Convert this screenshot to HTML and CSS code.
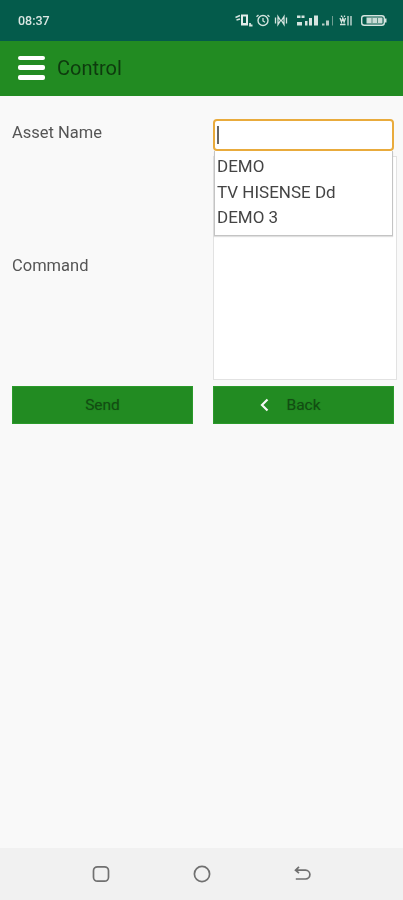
FILE: index.html
```html
<!DOCTYPE html>
<html lang="en">
<head>
<meta charset="utf-8">
<title>Control</title>
<link rel="stylesheet" href="styles.css">
</head>
<body>
<div class="screen">
  <div class="status">
    <span class="time">08:37</span>
    <svg class="status-icons" width="154" height="14" viewBox="0 0 154 14" fill="none" stroke="#d5e4df" stroke-width="1.400">
      <path d="M2.500 4.500 7 2.500M3.500 7 7 6" stroke-width="1.400"/>
      <rect x="8" y="1.500" width="7" height="11" fill="#e2ece9" stroke="none"/>
      <rect x="10" y="3.500" width="3" height="6.500" fill="#045b4b" stroke="none"/>
      <path d="M17 10v2.500h2.500" stroke-width="1.800"/>
      <circle cx="30" cy="7.500" r="5"/>
      <path d="M30 5v3l2 1.200M25.500 2l-2 1.800M34.500 2l2 1.800" stroke-width="1.300"/>
      <path d="M42.500 4.500v6M45 3.500l2.500 4-2.500 4zM51 3.500l-2.500 4 2.500 4zM53.500 4.500v6" stroke-width="1.300"/>
      <rect x="64" y="2.500" width="3.500" height="2.500" fill="#d5e4df" stroke="none"/>
      <rect x="68.500" y="2.500" width="3" height="2.500" fill="#d5e4df" stroke="none"/>
      <rect x="64" y="9" width="5" height="3.500" fill="#d5e4df" stroke="none"/>
      <path d="M72 12.500h2.500V8H72zM76 12.500h3V5h-3zM81 12.500h4V2.500h-4z" fill="#d5e4df" stroke="none"/>
      <path d="M89 12.500h2.500V10.500H89zM93 12.500h3V7.500h-3z" fill="#b6cdc6" stroke="none"/>
      <path d="M99.500 3v9.500" stroke="#6f9d91" stroke-width="1"/>
      <path d="M107 5l1.500 4 1.300-4 1.300 4 1.400-4M108.500 2.500v1.500M111.500 2.500v1.500M115 3v9.500M118 3v9.500M107 11.500h5.500" stroke-width="1.300"/>
      <rect x="128.700" y="2.700" width="22.600" height="9.600" rx="2.500" stroke-width="1.400"/>
      <rect x="152" y="5.500" width="1.500" height="4" fill="#d5e4df" stroke="none"/>
      <rect x="133.500" y="4.500" width="16" height="6" fill="#c9dcd6" stroke="none"/>
      <path d="M139 5v5M144.500 5v5" stroke="#5d8f82" stroke-width="1"/>
    </svg>
  </div>
  <header class="appbar">
    <div class="burger"><i></i><i></i><i></i></div>
    <h1 class="title">Control</h1>
  </header>
  <main class="content">
    <div class="form">
      <div class="row row-asset">
        <label class="label">Asset Name</label>
        <div class="field">
          <div class="input"><span class="caret"></span></div>
          <ul class="dropdown">
            <li>DEMO</li>
            <li>TV HISENSE Dd</li>
            <li>DEMO 3</li>
          </ul>
        </div>
      </div>
      <div class="row row-command">
        <label class="label">Command</label>
        <div class="listbox"></div>
      </div>
      <div class="row row-buttons">
        <button class="btn">Send</button>
        <button class="btn btn-back">
          <svg class="chev" width="9" height="14" viewBox="0 0 9 14" fill="none" stroke="#f4f8f4" stroke-width="2.200"><path d="M7.500 1.500 2 7l5.500 5.500"/></svg>
          <span>Back</span>
        </button>
      </div>
    </div>
  </main>
  <nav class="navbar">
    <svg width="18" height="18" viewBox="0 0 18 18" fill="none" stroke="#707070" stroke-width="1.700"><rect x="1.500" y="1.800" width="15" height="14.400" rx="4"/></svg>
    <svg width="18" height="18" viewBox="0 0 18 18" fill="none" stroke="#707070" stroke-width="1.700"><circle cx="9" cy="9" r="7.600"/></svg>
    <svg width="18" height="18" viewBox="0 0 18 18" fill="none" stroke="#707070" stroke-width="1.700"><path d="M2.500 5.200h10a4.100 4.100 0 0 1 0 8.800H2.800M6 1.800 2.500 5.200 6 8.200"/></svg>
  </nav>
</div>
</body>
</html>
```
FILE: styles.css
```css
* { box-sizing: border-box; }
html, body { margin: 0; padding: 0; }
body { font-family: Roboto, "Liberation Sans", sans-serif; background: #f9f9f9; }
.screen { width: 403px; height: 900px; display: flex; flex-direction: column; overflow: hidden; background: #f9f9f9; }

.status { height: 41px; flex: none; background: #045b4b; display: flex; align-items: center; justify-content: space-between; padding: 0 16px 0 18px; }
.time { font-size: 12.500px; font-weight: 500; color: #d9e6e2; filter: blur(.3px); }
.status-icons { filter: blur(.4px); margin-top: -1px; }

.appbar { height: 55px; flex: none; background: #228b22; display: flex; align-items: center; padding: 0 0 0 18px; gap: 12px; }
.burger { width: 27px; height: 24px; display: flex; flex-direction: column; justify-content: space-between; margin-top: -2px; }
.burger i { display: block; height: 4.500px; border-radius: 2px; background: #fff; }
.title { margin: -2px 0 0; font-size: 20px; font-weight: 400; color: #0e3a0e; filter: blur(.3px); }

.content { flex: 1; padding: 23px 6px 0 12px; }
.form { display: flex; flex-direction: column; }
.row { display: grid; grid-template-columns: 181px 181px; column-gap: 20px; }
.row-asset { height: 37px; }
.row-command { height: 224px; align-items: center; grid-template-columns: 181px 184px; }
.row-buttons { margin-top: 6px; }

.label { font-size: 16.500px; color: #555; filter: blur(.3px); }
.row-asset .label { padding-top: 4px; }
.row-command .label { margin-top: -6px; }

.field { position: relative; }
.input { height: 32px; background: #fff; border: 2px solid #e9ab3c; border-radius: 4px; display: flex; align-items: center; padding-left: 2px; }
.caret { width: 1.500px; height: 18px; background: #666; }
.dropdown { position: absolute; z-index: 2; left: 1px; right: 1px; top: 32px; height: 85px; margin: 0; padding: 3px 0 0 2px; list-style: none; background: #fff; border: 1px solid #c4c4c4; border-top: 0; box-shadow: 0 1px 1px rgba(0, 0, 0, .12); font-size: 17px; line-height: 25.700px; color: #444; }
.dropdown li { filter: blur(.3px); white-space: nowrap; }

.listbox { height: 224px; background: #fff; border: 1px solid #e2e2e2; }

.btn { height: 38px; border: 1px solid #2b9a2b; background: #228b22; color: #124d12; font: 400 15.500px Roboto, "Liberation Sans", sans-serif; text-shadow: 0 0 1px rgba(18, 77, 18, .4); display: flex; align-items: center; justify-content: center; gap: 17px; padding: 0; }
.btn-back { padding-right: 26px; }

.navbar { height: 52px; flex: none; background: #f1f1f1; display: flex; align-items: center; padding: 0 92px; justify-content: space-between; }
```
